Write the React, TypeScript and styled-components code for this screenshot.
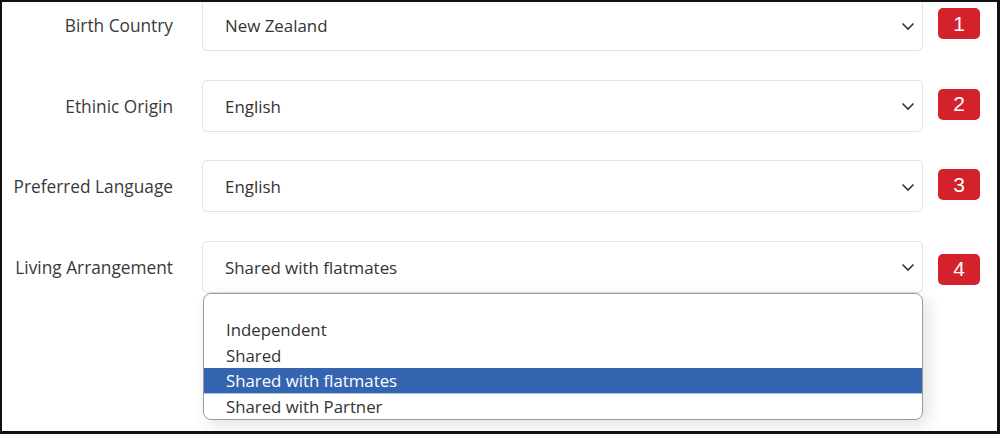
import React from "react";
import styled, { createGlobalStyle } from "styled-components";

const GlobalStyle = createGlobalStyle`
  html, body {
    margin: 0;
    padding: 0;
    background: #ffffff;
  }
  body {
    font-family: "Open Sans", "Noto Sans", sans-serif;
    color: #333333;
  }
`;

const Frame = styled.div`
  width: 1000px;
  height: 434px;
  box-sizing: border-box;
  border: 2px solid #111111;
  border-right-width: 3px;
  border-bottom-width: 3px;
  overflow: hidden;
  background: #ffffff;
`;

const Form = styled.div`
  display: flex;
  flex-direction: column;
  gap: 28.67px;
  margin-top: -3px;
`;

const Row = styled.div`
  display: flex;
  align-items: center;
  height: 52px;
`;

const Label = styled.div`
  width: 171px;
  flex: none;
  text-align: right;
  font-size: 17.3px;
  color: #3a3a3a;
  margin-right: 29px;
  padding-top: 1px;
`;

const SelectWrap = styled.div`
  position: relative;
  width: 721px;
  height: 52px;
  flex: none;
`;

const SelectBox = styled.div`
  height: 100%;
  box-sizing: border-box;
  border: 1px solid #e2e2e2;
  border-radius: 5px;
  display: flex;
  align-items: center;
  justify-content: space-between;
  padding: 1px 7px 0 22px;
  font-size: 16.9px;
  color: #333333;
  background: #ffffff;
`;

const Chevron = styled.svg`
  width: 14px;
  height: 14px;
`;

const Badge = styled.div<{ $offset: number }>`
  align-self: flex-start;
  margin-top: ${({ $offset }) => $offset}px;
  margin-left: 15px;
  width: 42px;
  height: 31px;
  border-radius: 5px;
  background: #d3222b;
  color: #ffffff;
  display: flex;
  align-items: center;
  justify-content: center;
  font-family: "Liberation Sans", Arial, sans-serif;
  font-size: 21px;
`;

const Popup = styled.ul`
  position: absolute;
  top: 52px;
  left: 1px;
  width: 720px;
  box-sizing: border-box;
  margin: 0;
  padding: 23px 0 0 0;
  list-style: none;
  background: #ffffff;
  border: 1px solid #9c9c9c;
  border-radius: 8px;
  overflow: hidden;
  box-shadow: 5px 5px 16px rgba(0, 0, 0, 0.12);
  z-index: 2;
`;

const Option = styled.li<{ $active?: boolean }>`
  height: 25.6px;
  line-height: 25.6px;
  padding-left: 22px;
  font-size: 16.8px;
  color: ${({ $active }) => ($active ? "#ffffff" : "#333333")};
  background: ${({ $active }) => ($active ? "#3565b1" : "transparent")};
  border-bottom: ${({ $active }) => ($active ? "1px solid #a9c6ea" : "none")};
  box-sizing: border-box;
`;

const rows = [
  { label: "Birth Country", value: "New Zealand", badge: "1", offset: 9 },
  { label: "Ethinic Origin", value: "English", badge: "2", offset: 9 },
  { label: "Preferred Language", value: "English", badge: "3", offset: 9 },
  { label: "Living Arrangement", value: "Shared with flatmates", badge: "4", offset: 13 },
];

const options = ["Independent", "Shared", "Shared with flatmates", "Shared with Partner"];

export default function App() {
  return (
    <>
      <GlobalStyle />
      <Frame>
        <Form>
          {rows.map((row, i) => (
            <Row key={row.label}>
              <Label>{row.label}</Label>
              <SelectWrap>
                <SelectBox>
                  <span>{row.value}</span>
                  <Chevron viewBox="0 0 14 14" fill="none">
                    <path d="M1.5 4.5 L7 10 L12.5 4.5" stroke="#333" strokeWidth="1.6" />
                  </Chevron>
                </SelectBox>
                {i === rows.length - 1 && (
                  <Popup>
                    {options.map((opt) => (
                      <Option key={opt} $active={opt === row.value}>
                        {opt}
                      </Option>
                    ))}
                  </Popup>
                )}
              </SelectWrap>
              <Badge $offset={row.offset}>{row.badge}</Badge>
            </Row>
          ))}
        </Form>
      </Frame>
    </>
  );
}
